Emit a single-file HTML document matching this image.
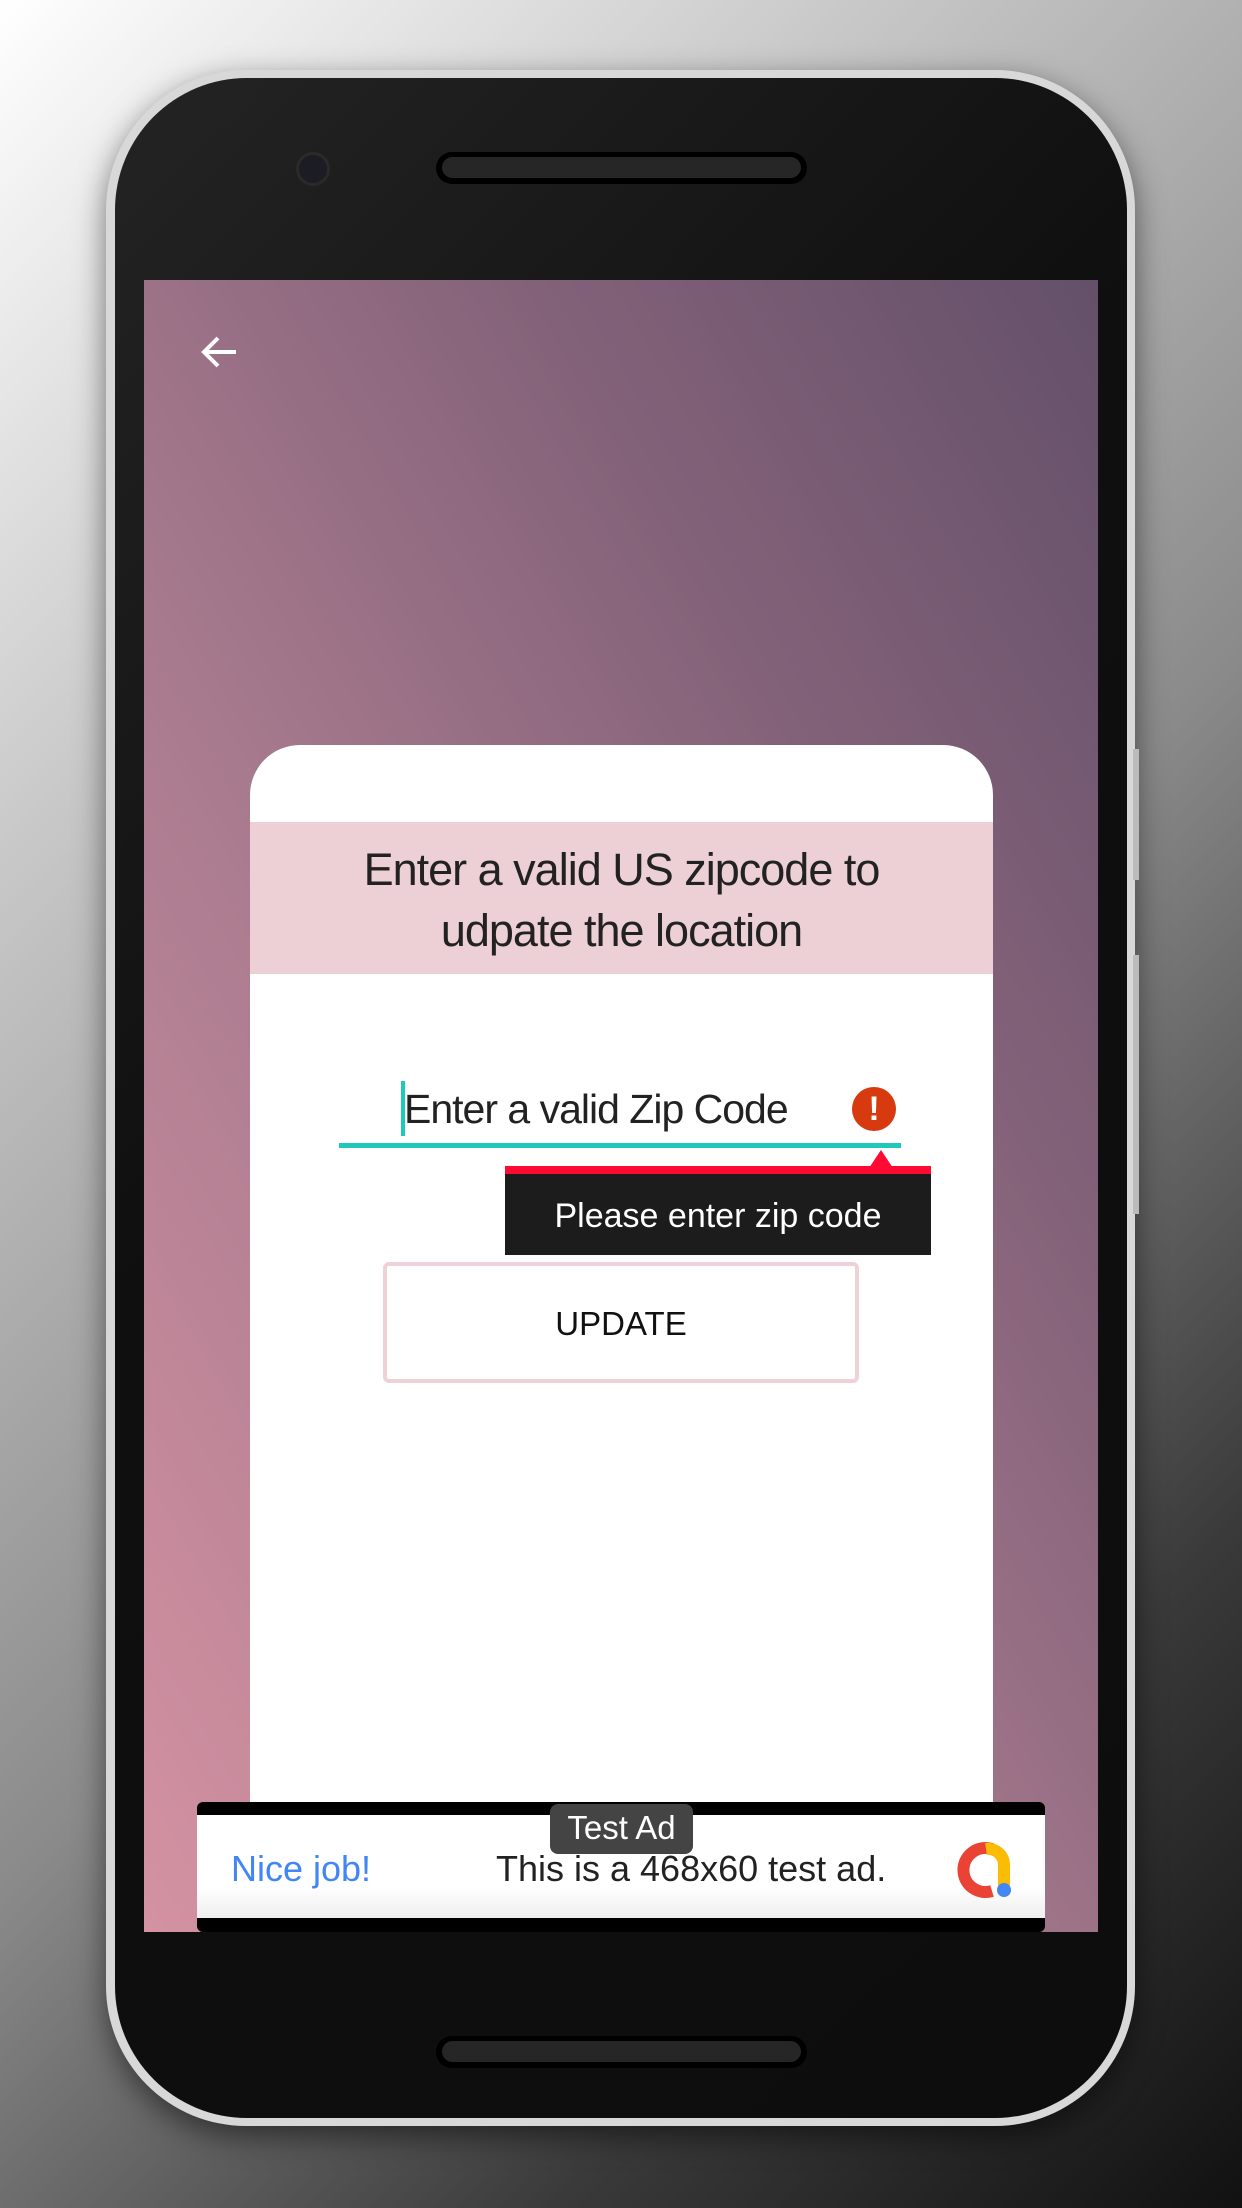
<!DOCTYPE html>
<html><head><meta charset="utf-8"><style>
*{margin:0;padding:0;box-sizing:border-box}
body{width:1242px;height:2208px;overflow:hidden;position:relative;font-family:"Liberation Sans",sans-serif;
background:linear-gradient(135deg,#ffffff 0%,#c8c8c8 25%,#8a8a8a 55%,#3a3a3a 80%,#111 100%);}
.abs{position:absolute}
.phone{left:106px;top:70px;width:1029px;height:2056px;border-radius:140px;background:#d8d8d8;box-shadow:0 10px 30px rgba(0,0,0,.5)}
.inner{left:115px;top:78px;width:1012px;height:2040px;border-radius:132px;background:linear-gradient(135deg,#242424,#0f0f0f 40%,#0d0d0d)}
.screen{left:144px;top:280px;width:954px;height:1652px;overflow:hidden;
background:linear-gradient(to top right,#d492a2 0%,#a87a8e 40%,#836279 70%,#64506a 100%)}
.spk{width:371px;height:32px;border-radius:16px;background:#000;}
.spk i{position:absolute;left:6px;top:5px;right:6px;bottom:6px;border-radius:12px;background:#262626}
</style></head><body>
<div class="abs phone"></div>
<div class="abs" style="left:1133px;top:749px;width:6px;height:131px;background:#bbb"></div>
<div class="abs" style="left:1133px;top:955px;width:6px;height:259px;background:#bbb"></div>
<div class="abs inner"></div>
<div class="abs spk" style="left:436px;top:152px"><i></i></div>
<div class="abs" style="left:296px;top:152px;width:34px;height:34px;border-radius:50%;background:#1c1c24;border:3px solid #2a2a2a"></div>
<div class="abs spk" style="left:436px;top:2036px"><i></i></div>
<div class="abs screen">
  <svg class="abs" style="left:50px;top:50px" width="48" height="48" viewBox="0 0 48 48"><path d="M42 22H10M24 8L10 22l14 14" stroke="#fff" stroke-width="4" fill="none"/></svg>
  <div class="abs" style="left:106px;top:465px;width:743px;height:1200px;background:#fff;border-radius:50px 50px 0 0"></div>
  <div class="abs" style="left:106px;top:542px;width:743px;height:152px;background:#edd0d6;text-align:center;font-size:45px;line-height:61px;color:#222;padding-top:17px;letter-spacing:-1px">Enter a valid US zipcode to<br>udpate the location</div>
  <div class="abs" style="left:257px;top:801px;width:4px;height:55px;background:#1fc8bb"></div>
  <div class="abs" style="left:260px;top:806px;font-size:41px;color:#222;letter-spacing:-1px">Enter a valid Zip Code</div>
  <div class="abs" style="left:195px;top:863px;width:562px;height:5px;background:#1fc8bb"></div>
  <div class="abs" style="left:708px;top:807px;width:44px;height:44px;border-radius:50%;background:#d83a10;color:#fff;font-weight:bold;font-size:34px;text-align:center;line-height:44px">!</div>
  <div class="abs" style="left:361px;top:886px;width:426px;height:89px;background:#1c1c1c;border-top:8px solid #ff0a32;color:#fff;font-size:34px;text-align:center;line-height:84px">Please enter zip code</div>
  <svg class="abs" style="left:725px;top:870px" width="24" height="18"><path d="M0 18L12 0L24 18Z" fill="#ff0a32"/></svg>
  <div class="abs" style="left:239px;top:982px;width:476px;height:121px;border:4px solid #efd2d8;border-radius:6px;text-align:center;line-height:116px;font-size:33px;color:#111">UPDATE</div>
  <div class="abs" style="left:53px;top:1522px;width:848px;height:130px;background:#000;border-radius:6px"></div>
  <div class="abs" style="left:53px;top:1535px;width:848px;height:103px;background:linear-gradient(#fff 70%,#eee)"></div>
  <div class="abs" style="left:406px;top:1524px;width:143px;height:50px;background:#444;border-radius:8px;color:#fff;font-size:33px;text-align:center;line-height:48px">Test Ad</div>
  <div class="abs" style="left:87px;top:1568px;font-size:36px;color:#4285f4">Nice job!</div>
  <div class="abs" style="left:352px;top:1568px;font-size:36px;color:#222">This is a 468x60 test ad.</div>
  <svg class="abs" style="left:810px;top:1560px" width="60" height="60" viewBox="0 0 60 60"><path d="M38 9A22 22 0 1 0 38 51" stroke="#ea4335" stroke-width="12" fill="none"/><path d="M32 9A16 16 0 0 1 50 24V46" stroke="#fbbc04" stroke-width="12" fill="none"/><circle cx="50" cy="50" r="7" fill="#4285f4"/></svg>
</div>
</body></html>
